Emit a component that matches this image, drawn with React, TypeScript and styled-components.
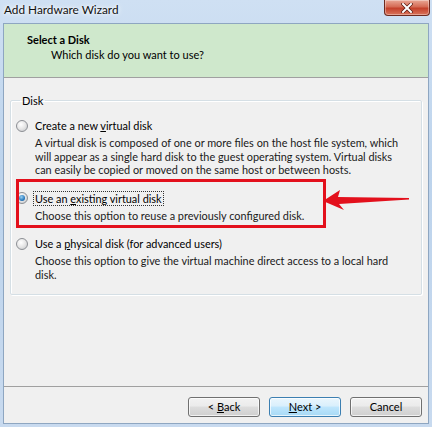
import styled, { createGlobalStyle } from "styled-components";

const GlobalStyle = createGlobalStyle`
  html, body {
    margin: 0;
    padding: 0;
    background: #ffffff;
  }
  * {
    box-sizing: border-box;
  }
`;

const SWindow = styled.div`
  width: 432px;
  height: 427px;
  display: flex;
  flex-direction: column;
  padding: 0 3px 3px 3px;
  background: linear-gradient(180deg, #cfe0f3 0%, #bcd3ec 40%, #c8daef 100%);
  font-family: Lato, "Noto Sans", sans-serif;
  color: #000;
`;

const STitleBar = styled.div`
  height: 23px;
  display: flex;
  justify-content: space-between;
  align-items: flex-start;
  padding-left: 1px;
  h1 {
    margin: 0;
    padding-top: 2px;
    font-size: 11.8px;
    font-weight: 400;
    line-height: 16px;
    color: #111;
    text-shadow: 0 0 6px #ffffff, 0 0 3px #ffffff;
  }
`;

const SCloseButton = styled.div`
  width: 46px;
  height: 16px;
  margin-right: -1px;
  display: flex;
  align-items: center;
  justify-content: center;
  border: 1px solid #6d2a1f;
  border-top: none;
  border-radius: 0 0 4px 4px;
  background: linear-gradient(180deg, #e9a896 0%, #d56b55 45%, #c4412b 55%, #d9745b 100%);
  box-shadow: inset 0 0 0 1px rgba(255, 255, 255, 0.35);
  svg {
    display: block;
  }
`;

const SClient = styled.div`
  flex: 1;
  display: flex;
  flex-direction: column;
  border: 1px solid #8ea6c1;
  background: #f0f0f0;
`;

const SHeader = styled.div`
  height: 54px;
  padding: 9px 0 0 23px;
  background: #cfe8cc;
  border-bottom: 1px solid #a0a0a0;
  h2 {
    margin: 0;
    font-size: 11px;
    font-weight: 700;
    line-height: 14px;
  }
  p {
    margin: 1px 0 0 24px;
    font-size: 11px;
    line-height: 14px;
  }
`;

const SBody = styled.div`
  flex: 1;
  padding: 16px 6px 0 6px;
`;

const SGroupBox = styled.fieldset`
  margin: 0;
  padding: 11px 6px 13px 5px;
  border: 1px solid #d5dfe5;
  border-radius: 2px;
  box-shadow: inset 1px 1px 0 #ffffff, 1px 1px 0 #ffffff;
  display: flex;
  flex-direction: column;
  gap: 14px;
  legend {
    padding: 0 2px;
    margin-left: 4px;
    font-size: 11px;
    line-height: 13px;
  }
`;

const SOption = styled.div`
  position: relative;
`;

const SOptionLabel = styled.div`
  display: flex;
  align-items: center;
  gap: 5px;
  font-size: 10.9px;
  line-height: 15px;
  span.text {
    padding: 0 1px;
    border: 1px dotted transparent;
    line-height: 13px;
  }
  span.focus {
    border-color: #333;
  }
  u {
    text-decoration-thickness: 1px;
    text-underline-offset: 1px;
  }
`;

const SRadio = styled.span<{ $checked?: boolean }>`
  width: 12px;
  height: 12px;
  flex: none;
  border-radius: 50%;
  border: 1px solid #8c8f94;
  background: radial-gradient(circle at 40% 35%, #ffffff 0%, #e6e6e6 50%, #c2c4c8 100%);
  display: flex;
  align-items: center;
  justify-content: center;
  &::after {
    content: "";
    display: ${({ $checked }) => ($checked ? "block" : "none")};
    width: 6px;
    height: 6px;
    border-radius: 50%;
    background: radial-gradient(circle at 40% 35%, #9ad0f2 0%, #2a7bbf 60%, #0f4d86 100%);
  }
`;

const SDescription = styled.p`
  margin: 3px 0 0 19px;
  font-size: 10.9px;
  line-height: 13.5px;
  color: #1a1a1a;
`;

const SHighlight = styled.div`
  position: absolute;
  left: 0;
  top: -12px;
  width: 310px;
  height: 49px;
  border: 3px solid #e3101c;
  pointer-events: none;
`;

const SArrow = styled.svg`
  position: absolute;
  left: 306px;
  top: -2px;
  overflow: visible;
`;

const SFooter = styled.div`
  height: 37px;
  border-top: 1px solid #a0a0a0;
  display: flex;
  justify-content: flex-end;
  align-items: flex-start;
  gap: 9px;
  padding: 10px 6px 0 0;
`;

const SButton = styled.button<{ $primary?: boolean }>`
  width: 72px;
  height: 20px;
  padding: 0;
  font-family: inherit;
  font-size: 11px;
  line-height: 16px;
  color: #000;
  border-radius: 3px;
  border: 1px solid ${({ $primary }) => ($primary ? "#3c7fb1" : "#707070")};
  background: ${({ $primary }) =>
    $primary
      ? "linear-gradient(180deg, #eaf6fd 0%, #d9effc 45%, #bee6fd 50%, #a7d9f5 100%)"
      : "linear-gradient(180deg, #f2f2f2 0%, #ebebeb 45%, #dddddd 50%, #cfcfcf 100%)"};
  box-shadow: inset 0 0 0 1px rgba(255, 255, 255, 0.7);
  u {
    text-underline-offset: 1px;
  }
`;

const options = [
  {
    id: "new",
    label: (
      <>
        Create a new <u>v</u>irtual disk
      </>
    ),
    lines: [
      "A virtual disk is composed of one or more files on the host file system, which",
      "will appear as a single hard disk to the guest operating system. Virtual disks",
      "can easily be copied or moved on the same host or between hosts.",
    ],
  },
  {
    id: "existing",
    label: (
      <>
        Use an <u>e</u>xisting virtual disk
      </>
    ),
    lines: ["Choose this option to reuse a previously configured disk."],
    checked: true,
  },
  {
    id: "physical",
    label: (
      <>
        Use a <u>p</u>hysical disk (for advanced users)
      </>
    ),
    lines: [
      "Choose this option to give the virtual machine direct access to a local hard",
      "disk.",
    ],
  },
];

const App = () => {
  return (
    <>
      <GlobalStyle />
      <SWindow>
        <STitleBar>
          <h1>Add Hardware Wizard</h1>
          <SCloseButton>
            <svg width="12" height="10" viewBox="0 0 12 10">
              <path
                d="M2 1 L10 9 M10 1 L2 9"
                stroke="#5a1a10"
                strokeWidth="3.4"
                strokeLinecap="square"
              />
              <path
                d="M2 1 L10 9 M10 1 L2 9"
                stroke="#ffffff"
                strokeWidth="2"
                strokeLinecap="square"
              />
            </svg>
          </SCloseButton>
        </STitleBar>
        <SClient>
          <SHeader>
            <h2>Select a Disk</h2>
            <p>Which disk do you want to use?</p>
          </SHeader>
          <SBody>
            <SGroupBox>
              <legend>Disk</legend>
              {options.map((o) => (
                <SOption key={o.id}>
                  {o.checked && (
                    <>
                      <SHighlight />
                      <SArrow width="88" height="22" viewBox="0 0 88 22">
                        <path
                          d="M1 12 L18 1 L16 8 L87 9 L87 10.5 L17 15 L22 21 Z"
                          fill="#e3101c"
                        />
                      </SArrow>
                    </>
                  )}
                  <SOptionLabel>
                    <SRadio $checked={o.checked} />
                    <span className={o.checked ? "text focus" : "text"}>{o.label}</span>
                  </SOptionLabel>
                  <SDescription>
                    {o.lines.map((l, i) => (
                      <span key={i}>
                        {l}
                        {i < o.lines.length - 1 && <br />}
                      </span>
                    ))}
                  </SDescription>
                </SOption>
              ))}
            </SGroupBox>
          </SBody>
          <SFooter>
            <SButton>
              &lt; <u>B</u>ack
            </SButton>
            <SButton $primary>
              <u>N</u>ext &gt;
            </SButton>
            <SButton>Cancel</SButton>
          </SFooter>
        </SClient>
      </SWindow>
    </>
  );
};

export default App;
